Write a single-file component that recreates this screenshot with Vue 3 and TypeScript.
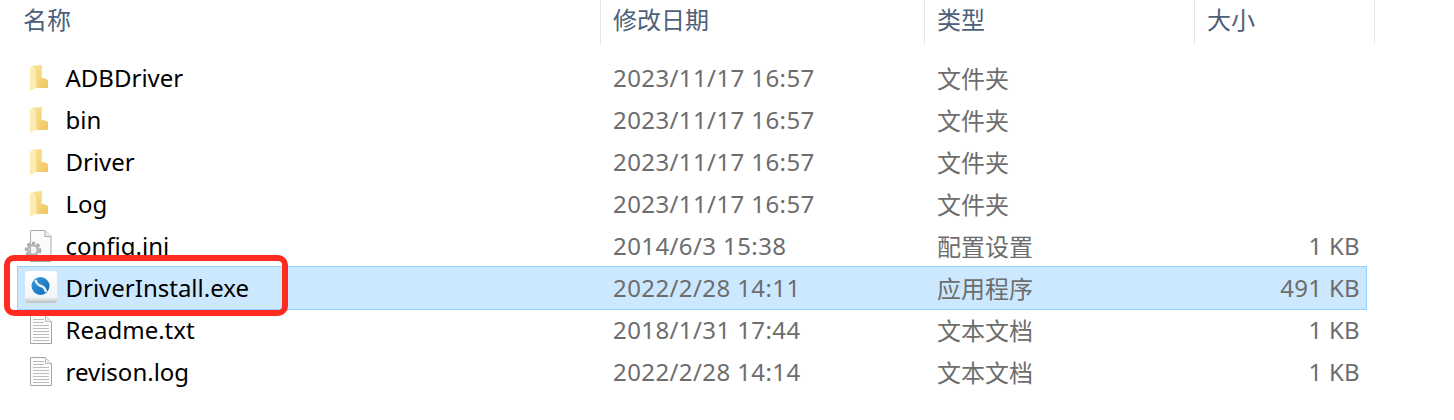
<template>
  <div class="explorer">
    <header class="list-header">
      <div class="head-cell head-name">名称</div>
      <div class="head-cell">修改日期</div>
      <div class="head-cell">类型</div>
      <div class="head-cell">大小</div>
    </header>

    <div class="file-list">
      <div
        v-for="file in files"
        :key="file.name"
        class="file-row"
        :class="{ 'file-row--selected': file.selected }"
      >
        <div class="file-name">
          <span class="icon-slot">
            <svg v-if="file.icon === 'folder'" width="24" height="28" viewBox="0 0 24 28">
              <defs>
                <linearGradient :id="`fold-${file.name}`" x1="0" y1="0" x2="1" y2="1">
                  <stop offset="0" stop-color="#fbe59c" />
                  <stop offset="1" stop-color="#efc562" />
                </linearGradient>
              </defs>
              <path d="M1.5 3 L11.7 2 V15 H14 L18 17 V25 H6 V7 Z" :fill="`url(#fold-${file.name})`" />
              <path d="M0 3.5 L6 6.5 V25 L0 28 Z" fill="#fcecb4" />
              <path d="M6 6.5 L8 7.5 V25 H6 Z" fill="#f5d888" />
            </svg>

            <svg v-else-if="file.icon === 'config'" width="30" height="34" viewBox="0 0 30 34">
              <path d="M3.5 2.5 H18 L24 8.5 V33.5 H3.5 Z" fill="#fbfbfb" stroke="#a9a9a9" />
              <path d="M18 2.5 V8.5 H24" fill="#eee" stroke="#a9a9a9" />
              <circle cx="6" cy="22" r="6.5" fill="none" stroke="#a8a8a8" stroke-width="3.5" stroke-dasharray="3 1.8" />
              <circle cx="6" cy="22" r="4.8" fill="none" stroke="#b8b8b8" stroke-width="2.8" />
              <circle cx="6" cy="22" r="2.2" fill="#f2f2f2" />
            </svg>

            <svg v-else-if="file.icon === 'exe'" width="34" height="34" viewBox="0 0 34 34">
              <defs>
                <linearGradient id="exe-box" x1="0" y1="0" x2="0" y2="1">
                  <stop offset="0" stop-color="#ffffff" />
                  <stop offset="0.82" stop-color="#f3f5f6" />
                  <stop offset="0.9" stop-color="#d9dcdc" />
                  <stop offset="1" stop-color="#b9bebe" />
                </linearGradient>
                <linearGradient id="exe-ball" x1="0" y1="0" x2="1" y2="1">
                  <stop offset="0" stop-color="#3f9ede" />
                  <stop offset="1" stop-color="#0c66b4" />
                </linearGradient>
              </defs>
              <rect x="0" y="1" width="32" height="32" rx="3.5" fill="url(#exe-box)" />
              <circle cx="15.5" cy="16" r="9" fill="url(#exe-ball)" />
              <path d="M10.5 10 Q12 15 16 16 Q20 17 21 22" fill="none" stroke="#e6f2fb" stroke-width="2.4" />
            </svg>

            <svg v-else width="24" height="32" viewBox="0 0 24 32">
              <path d="M0.5 2.5 H15.5 L21.5 8.5 V30.5 H0.5 Z" fill="#fcfcfc" stroke="#a4a4a4" />
              <path d="M15.5 2.5 V8.5 H21.5" fill="#ededed" stroke="#bbbbbb" />
              <path
                d="M3 6.5 H14 M3 9.5 H14 M3 12.5 H19 M3 15.5 H19 M3 18.5 H19 M3 21.5 H19 M3 24.5 H19 M3 27.5 H19"
                stroke="#bcbcbc"
              />
            </svg>
          </span>
          <span class="name-text">{{ file.name }}</span>
        </div>
        <div class="file-meta file-date">{{ file.date }}</div>
        <div class="file-meta">{{ file.type }}</div>
        <div class="file-meta file-size">{{ file.size }}</div>
      </div>
    </div>

    <div class="highlight-box"></div>
  </div>
</template>

<script setup lang="ts">
interface FileEntry {
  name: string
  date: string
  type: string
  size: string
  icon: 'folder' | 'config' | 'exe' | 'text'
  selected?: boolean
}

const files: FileEntry[] = [
  { name: 'ADBDriver', date: '2023/11/17 16:57', type: '文件夹', size: '', icon: 'folder' },
  { name: 'bin', date: '2023/11/17 16:57', type: '文件夹', size: '', icon: 'folder' },
  { name: 'Driver', date: '2023/11/17 16:57', type: '文件夹', size: '', icon: 'folder' },
  { name: 'Log', date: '2023/11/17 16:57', type: '文件夹', size: '', icon: 'folder' },
  { name: 'config.ini', date: '2014/6/3 15:38', type: '配置设置', size: '1 KB', icon: 'config' },
  { name: 'DriverInstall.exe', date: '2022/2/28 14:11', type: '应用程序', size: '491 KB', icon: 'exe', selected: true },
  { name: 'Readme.txt', date: '2018/1/31 17:44', type: '文本文档', size: '1 KB', icon: 'text' },
  { name: 'revison.log', date: '2022/2/28 14:14', type: '文本文档', size: '1 KB', icon: 'text' }
]
</script>

<style>
body {
  background: #ffffff;
}
</style>

<style scoped>
.explorer {
  position: relative;
  width: 1454px;
  height: 420px;
  overflow: hidden;
  background: #ffffff;
  font-family: "Noto Sans", "Noto Sans CJK SC", sans-serif;
  font-size: 24px;
}

.list-header {
  display: grid;
  grid-template-columns: 601px 324px 270px 180px;
  height: 44px;
}

.head-cell {
  padding: 0 0 0 12px;
  line-height: 39px;
  color: #4c607a;
  border-right: 1px solid #e5e5e5;
}

.head-name {
  padding-left: 23px;
}

.file-list {
  display: flex;
  flex-direction: column;
  width: 1350px;
  margin: 12px 0 0 17px;
}

.file-row {
  display: grid;
  grid-template-columns: 595px 324px 270px 159px;
  align-items: center;
  height: 42px;
  border: 1px solid transparent;
  box-sizing: border-box;
}

.file-row--selected {
  background: #cce8ff;
  border-color: #99d1ff;
  height: 44px;
  padding-bottom: 2px;
  margin-bottom: -2px;
}

.file-name {
  display: flex;
  align-items: center;
  color: #000000;
}

.icon-slot {
  display: flex;
  justify-content: center;
  align-items: center;
  width: 47.5px;
  height: 34px;
}

.icon-slot svg {
  overflow: visible;
}

.name-text {
  white-space: nowrap;
}

.file-meta {
  color: #6d6d6d;
  white-space: nowrap;
}

.file-date {
  letter-spacing: 0.4px;
}

.file-size {
  text-align: right;
  padding-right: 6px;
  letter-spacing: 0.3px;
}

.highlight-box {
  position: absolute;
  left: 4px;
  top: 255px;
  width: 284px;
  height: 61px;
  box-sizing: border-box;
  border: 6px solid #ff2a20;
  border-radius: 10px;
}
</style>
